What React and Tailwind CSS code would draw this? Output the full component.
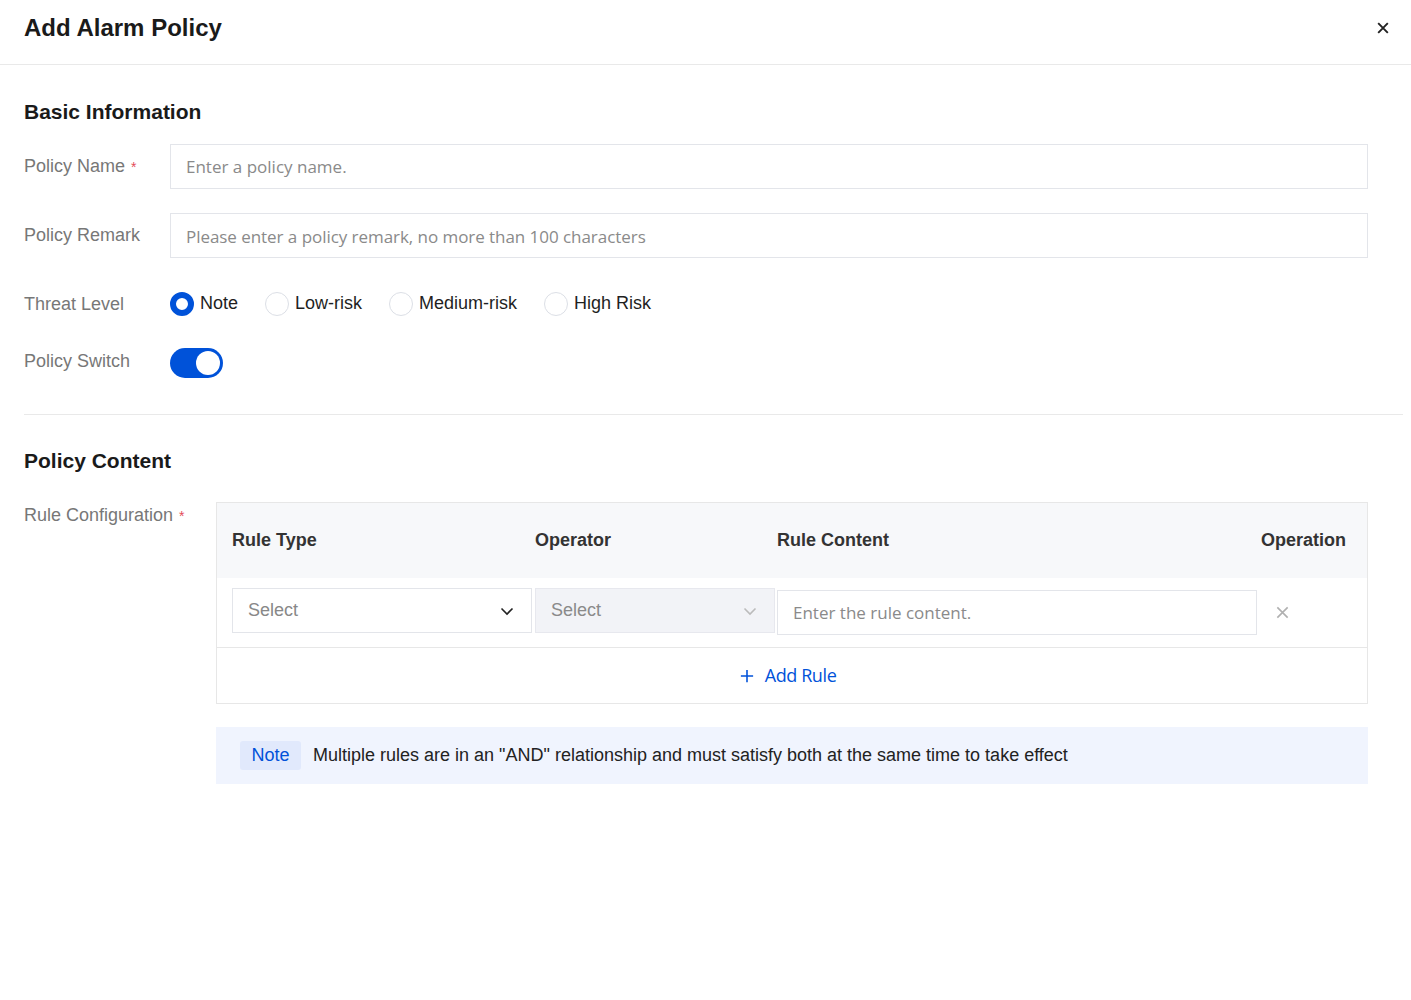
import React, { useState } from "react";

const sans = "font-['Liberation_Sans',Arial,sans-serif]";
const soft = "font-['Open_Sans','Noto_Sans',sans-serif]";

const ChevronDown = ({ className }) => (
  <svg viewBox="0 0 16 16" className={className} fill="none" stroke="currentColor" strokeWidth="1.6">
    <path d="M2.5 5.5L8 11l5.5-5.5" />
  </svg>
);

const Cross = ({ className, width = 2 }) => (
  <svg viewBox="0 0 16 16" className={className} fill="none" stroke="currentColor" strokeWidth={width}>
    <path d="M2.5 2.5l11 11M13.5 2.5l-11 11" />
  </svg>
);

const FormRow = ({ label, required, children, className = "", labelClass = "" }) => (
  <div className={`flex items-center ${className}`}>
    <div className={`w-[146px] shrink-0 text-[18px] text-[#777] ${labelClass}`}>
      {label}
      {required && <span className="ml-[6px] text-[14px] text-[#e34d59]">*</span>}
    </div>
    <div className="flex-1 pr-[35px]">{children}</div>
  </div>
);

const levels = ["Note", "Low-risk", "Medium-risk", "High Risk"];

export default function App() {
  const [level, setLevel] = useState("Note");
  const [enabled, setEnabled] = useState(true);

  return (
    <div className={`${sans} min-h-[1000px] w-full bg-white text-[#222]`}>
      {/* header */}
      <div className="flex h-[65px] items-center justify-between border-b border-[#e9e9e9] pb-[8px] pl-6 pr-[21px]">
        <h1 className="text-[24px] font-bold text-[#1a1a1a]">Add Alarm Policy</h1>
        <button className="text-[#222]">
          <Cross className="h-[14px] w-[14px]" width={2.2} />
        </button>
      </div>

      <div className="pl-6 pr-2">
        {/* basic info */}
        <h2 className="mt-[33px] text-[21px] font-bold leading-[28px] text-[#1a1a1a]">Basic Information</h2>

        <FormRow label="Policy Name" required className="mt-[18px]">
          <input
            placeholder="Enter a policy name."
            className={`${soft} h-[45px] w-full border border-[#e3e5ea] px-[15px] text-[17px] outline-none placeholder:text-[#8a8a8a]`}
          />
        </FormRow>

        <FormRow label="Policy Remark" className="mt-[24px]">
          <input
            placeholder="Please enter a policy remark, no more than 100 characters"
            className={`${soft} h-[45px] w-full border border-[#e3e5ea] px-[15px] pt-[2px] text-[17px] tracking-[-0.05px] outline-none placeholder:text-[#8a8a8a]`}
          />
        </FormRow>

        <FormRow label="Threat Level" className="mt-[30px] h-[32px]">
          <div className="flex items-center gap-[27px]">
            {levels.map((l) => (
              <label key={l} className="flex cursor-pointer items-center gap-[6px]" onClick={() => setLevel(l)}>
                <span
                  className={`h-[24px] w-[24px] rounded-full bg-white ${
                    level === l ? "border-[6px] border-[#0052d9]" : "border border-[#dcdfe6]"
                  }`}
                />
                <span className="pb-[1px] text-[18px] text-[#1f1f1f]">{l}</span>
              </label>
            ))}
          </div>
        </FormRow>

        <FormRow label="Policy Switch" className="mt-[28px] h-[30px]" labelClass="pb-[3px]">
          <button
            onClick={() => setEnabled(!enabled)}
            className={`flex h-[30px] w-[53px] items-center rounded-full p-[3px] ${
              enabled ? "justify-end bg-[#0052d9]" : "justify-start bg-[#dcdcdc]"
            }`}
          >
            <span className="h-[24px] w-[24px] rounded-full bg-white" />
          </button>
        </FormRow>

        <div className="mt-[36px] border-t border-[#e9e9e9]" />

        {/* policy content */}
        <h2 className="mt-[32px] text-[21px] font-bold leading-[28px] text-[#1a1a1a]">Policy Content</h2>

        <div className="mt-[27px] flex items-start">
          <div className="w-[192px] shrink-0 pt-[1px] text-[18px] leading-[24px] text-[#777]">
            Rule Configuration<span className="ml-[6px] text-[14px] text-[#e34d59]">*</span>
          </div>
          <div className="flex-1 pr-[35px]">
            <div className="border border-[#e7e7e7]">
              <div className="grid h-[75px] grid-cols-[318px_242px_1fr_auto] items-center bg-[#f7f8fa] text-[18px] font-bold text-[#333]">
                <div className="pl-[15px]">Rule Type</div>
                <div>Operator</div>
                <div>Rule Content</div>
                <div className="pr-[21px]">Operation</div>
              </div>
              <div className="grid h-[70px] grid-cols-[318px_242px_480px_1fr] items-start border-b border-[#e7e7e7]">
                <div className="pl-[15px] pt-[10px]">
                  <div className="flex h-[45px] w-[300px] items-center justify-between border border-[#e3e5ea] bg-white pl-[15px] pr-[16px]">
                    <span className="text-[18px] text-[#888]">Select</span>
                    <ChevronDown className="h-[16px] w-[16px] text-[#222]" />
                  </div>
                </div>
                <div className="pt-[10px]">
                  <div className="flex h-[45px] w-[240px] items-center justify-between border border-[#e7e8ee] bg-[#f2f3f7] pl-[15px] pr-[16px]">
                    <span className="text-[18px] text-[#8a8a8a]">Select</span>
                    <ChevronDown className="h-[16px] w-[16px] text-[#bbbbbb]" />
                  </div>
                </div>
                <div className="pt-[12px]">
                  <input
                    placeholder="Enter the rule content."
                    className={`${soft} h-[45px] w-full border border-[#e3e5ea] px-[15px] text-[17px] outline-none placeholder:text-[#8a8a8a]`}
                  />
                </div>
                <div className="pl-[18px] pt-[27px]">
                  <Cross className="h-[15px] w-[15px] text-[#b0b0b0]" width={1.7} />
                </div>
              </div>
              <div className="flex h-[55px] items-center justify-center">
                <button className={`${soft} mr-[8px] flex items-center gap-[11px] text-[18px] text-[#0052d9]`}>
                  <svg viewBox="0 0 16 16" className="h-[14px] w-[14px]" fill="none" stroke="currentColor" strokeWidth="1.8">
                    <path d="M8 1v14M1 8h14" />
                  </svg>
                  <span className="tracking-[-0.4px]">Add Rule</span>
                </button>
              </div>
            </div>

            <div className="mt-[23px] flex h-[57px] items-center bg-[#f0f4fe] pl-[24px]">
              <span className="flex h-[29px] items-center rounded-[3px] bg-[#e1e9fc] px-[11.5px] text-[18px] text-[#0052d9]">
                Note
              </span>
              <span className="ml-[12px] text-[18px] text-[#222]">
                Multiple rules are in an "AND" relationship and must satisfy both at the same time to take effect
              </span>
            </div>
          </div>
        </div>
      </div>
    </div>
  );
}
